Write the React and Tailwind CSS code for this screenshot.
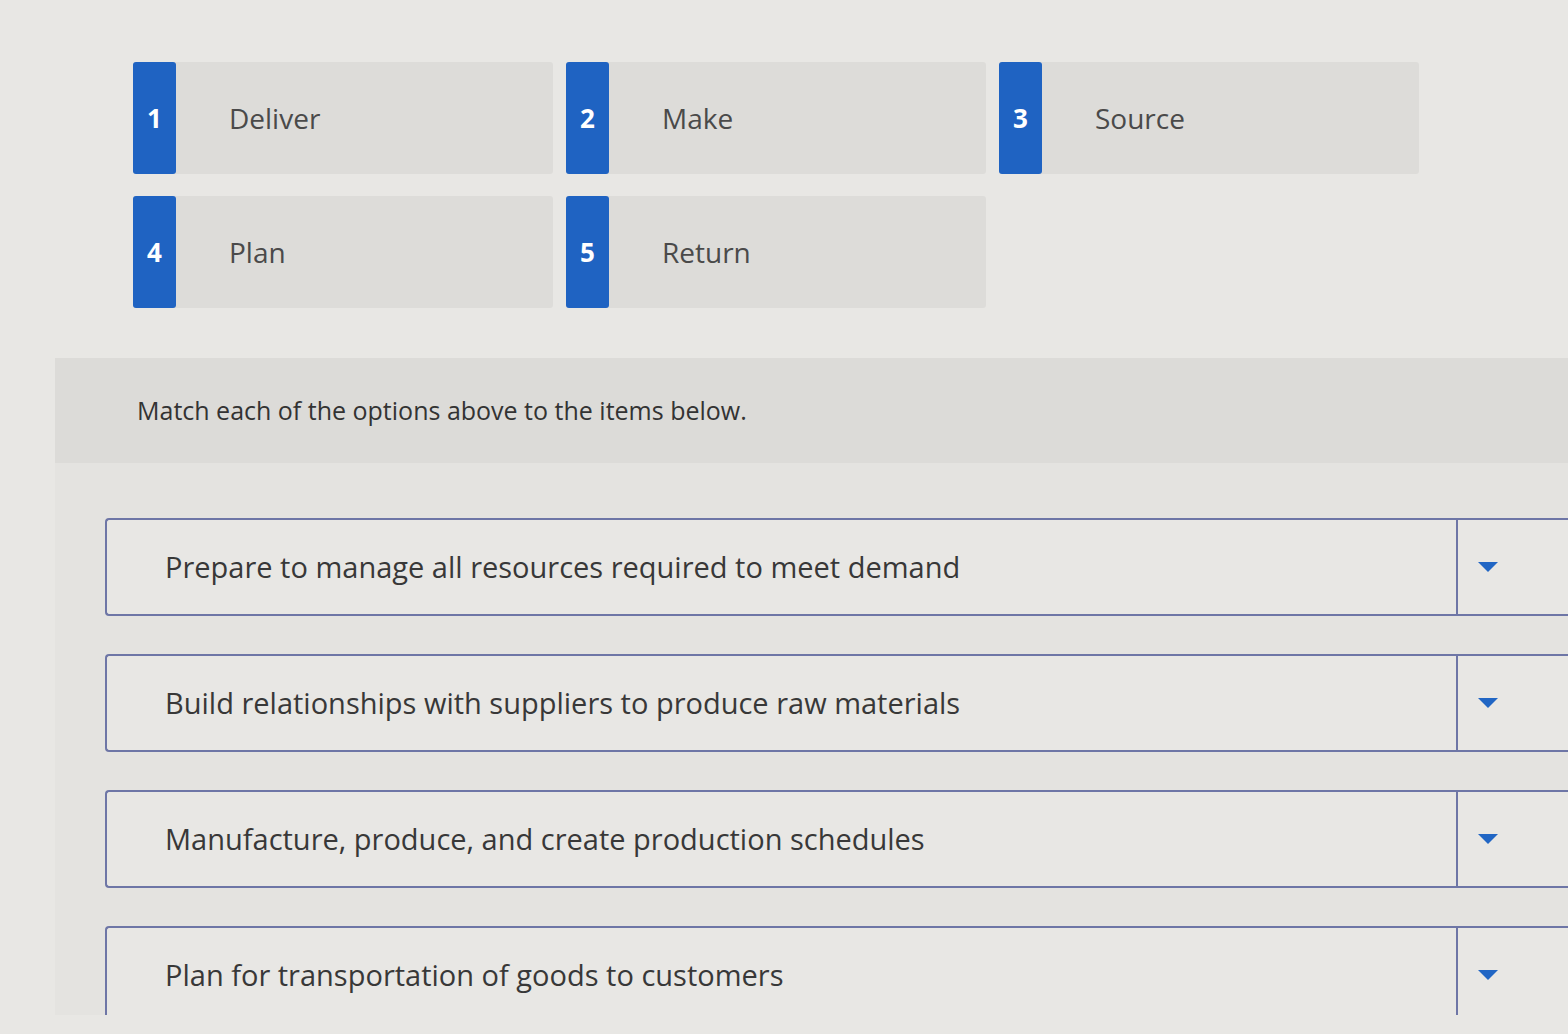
import React from 'react';

const options = [
  { n: 1, label: 'Deliver' },
  { n: 2, label: 'Make' },
  { n: 3, label: 'Source' },
  { n: 4, label: 'Plan' },
  { n: 5, label: 'Return' },
];

const items = [
  'Prepare to manage all resources required to meet demand',
  'Build relationships with suppliers to produce raw materials',
  'Manufacture, produce, and create production schedules',
  'Plan for transportation of goods to customers',
];

const OptionTile = ({ n, label }) => (
  <div className="flex h-[112px] w-[420px] rounded-[3px] bg-[#dddcd9]">
    <div className="flex w-[43px] items-center justify-center rounded-[3px] bg-[#1f63c2] text-[26px] font-bold text-white">
      {n}
    </div>
    <div className="flex items-center pl-[53px] text-[28px] text-[#4a4a4a]">{label}</div>
  </div>
);

const MatchRow = ({ text }) => (
  <div className="flex h-[98px] shrink-0 rounded-l-[4px] border-y-2 border-l-2 border-[#6e76a6] bg-[#e8e7e4]">
    <div className="flex flex-1 items-center pl-[58px] text-[29px] text-[#383838]">{text}</div>
    <div className="flex w-[112px] items-center justify-center border-l-2 border-[#6e76a6] pr-[50px]">
      <svg width="22" height="12" viewBox="0 0 22 12">
        <path d="M1 1 L21 1 L11 11 Z" fill="#2166c4" />
      </svg>
    </div>
  </div>
);

export default function App() {
  return (
    <div className="h-[1034px] w-[1568px] overflow-hidden bg-[#e8e7e4] font-['Open_Sans',sans-serif]">
      <div className="grid w-fit grid-cols-[420px_420px_420px] gap-x-[13px] gap-y-[22px] pl-[133px] pt-[62px]">
        {options.map((o) => (
          <OptionTile key={o.n} {...o} />
        ))}
      </div>

      <div className="ml-[55px] mt-[50px] h-[657px] overflow-hidden bg-[#e4e3e0]">
        <div className="flex h-[105px] items-center bg-[#dcdbd8] pl-[82px] text-[25px] text-[#333]">
          Match each of the options above to the items below.
        </div>
        <div className="flex flex-col gap-[38px] pl-[50px] pt-[55px]">
          {items.map((t) => (
            <MatchRow key={t} text={t} />
          ))}
        </div>
      </div>
    </div>
  );
}
